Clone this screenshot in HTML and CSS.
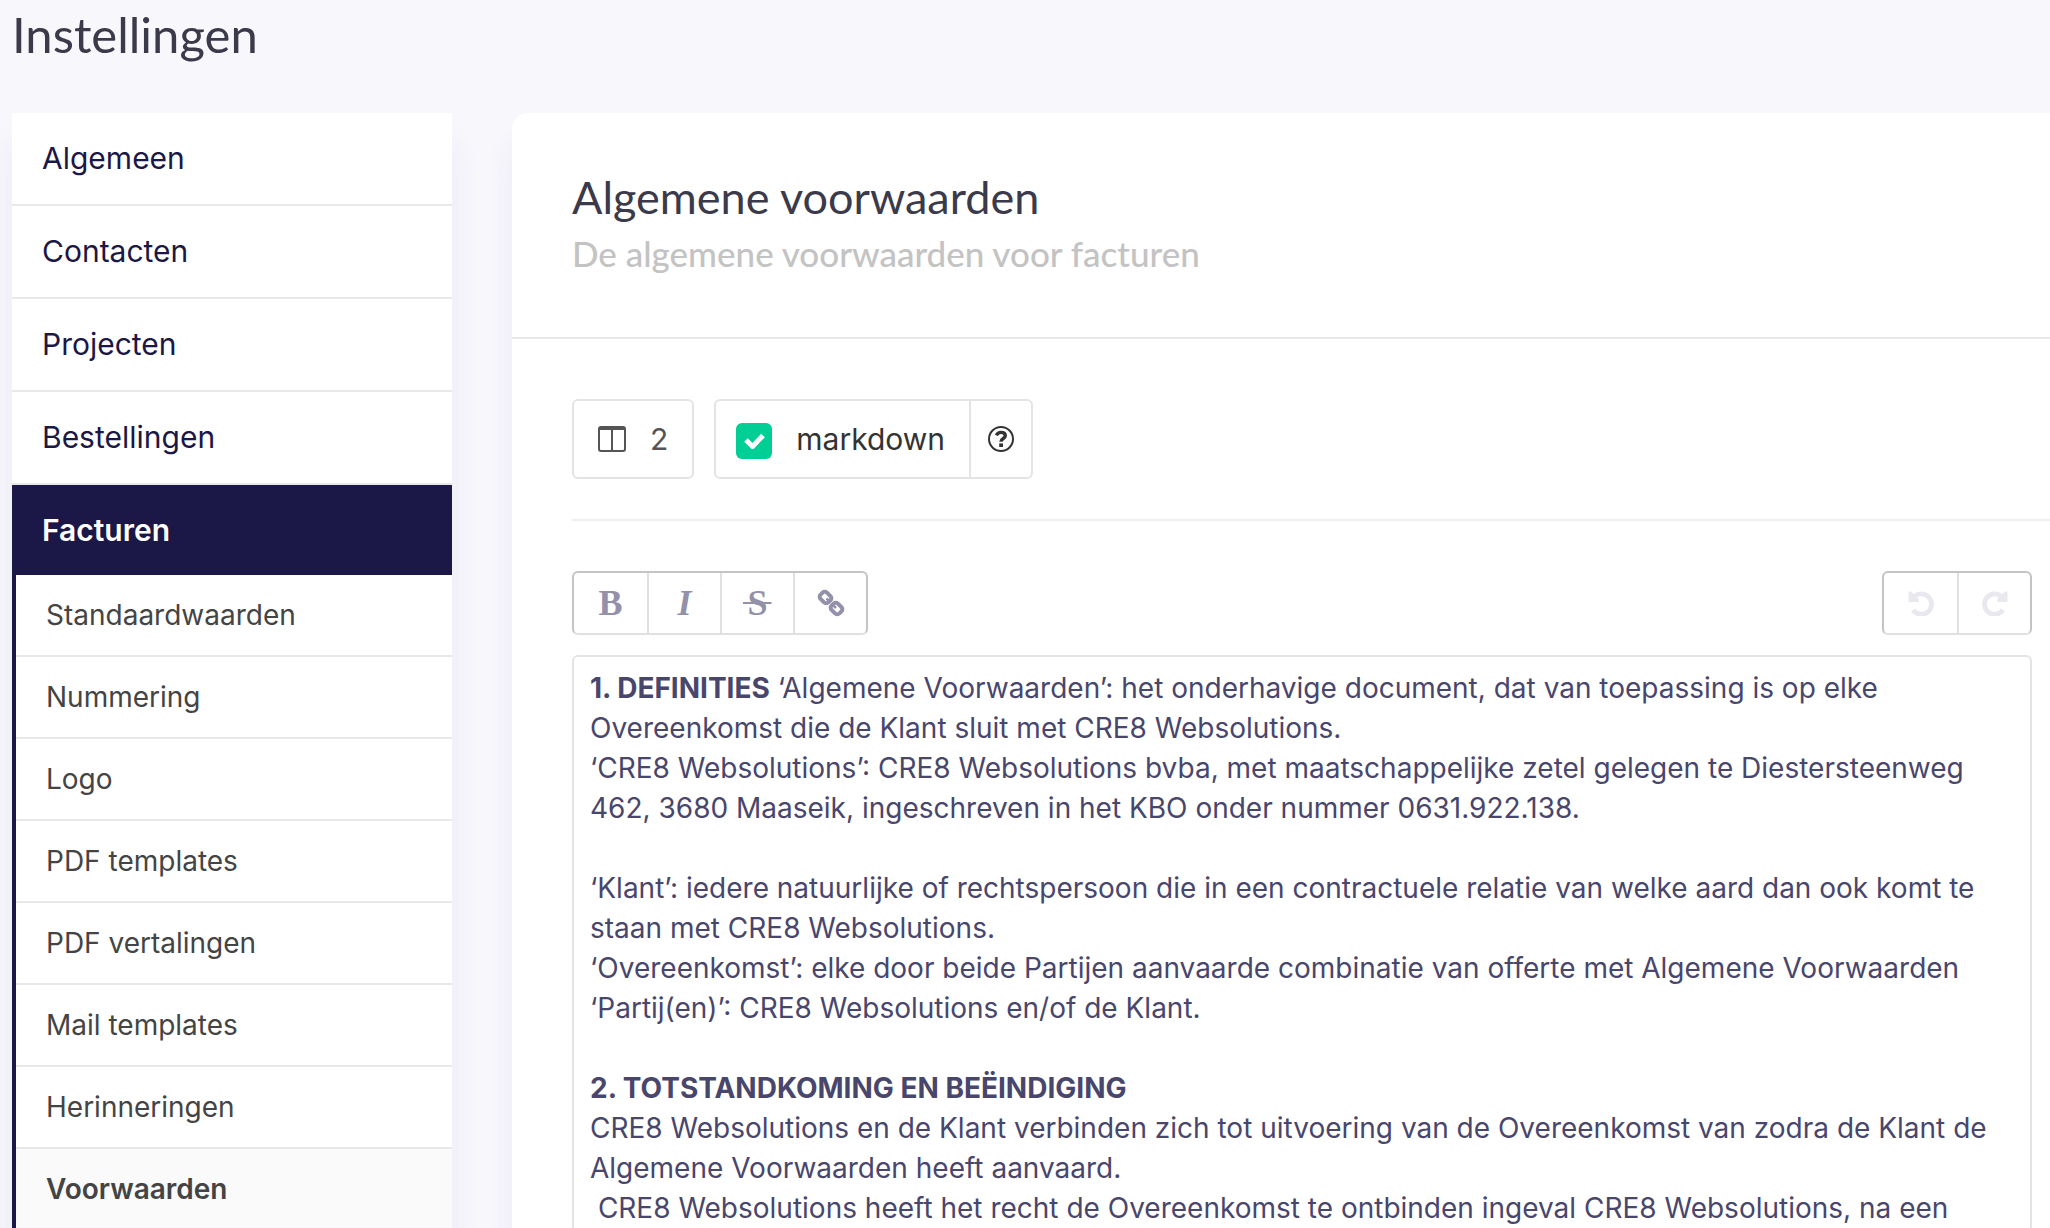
FILE: index.html
```
<!DOCTYPE html>
<html lang="nl">
<head>
<meta charset="utf-8">
<title>Instellingen</title>
<link rel="stylesheet" href="styles.css">
</head>
<body>
<h1 class="page-title">Instellingen</h1>
<div class="layout">
  <nav class="sidebar" aria-label="Instellingen">
    <a class="nav-item" href="#algemeen">Algemeen</a>
    <a class="nav-item" href="#contacten">Contacten</a>
    <a class="nav-item" href="#projecten">Projecten</a>
    <a class="nav-item" href="#bestellingen">Bestellingen</a>
    <a class="nav-item nav-item-active" href="#facturen">Facturen</a>
    <div class="subnav">
      <a class="sub-item" href="#standaardwaarden">Standaardwaarden</a>
      <a class="sub-item" href="#nummering">Nummering</a>
      <a class="sub-item" href="#logo">Logo</a>
      <a class="sub-item" href="#pdf-templates">PDF templates</a>
      <a class="sub-item" href="#pdf-vertalingen">PDF vertalingen</a>
      <a class="sub-item" href="#mail-templates">Mail templates</a>
      <a class="sub-item" href="#herinneringen">Herinneringen</a>
      <a class="sub-item sub-item-active" href="#voorwaarden" aria-current="page">Voorwaarden</a>
    </div>
  </nav>
  <main class="card">
    <header class="card-header">
      <h2 class="card-title">Algemene voorwaarden</h2>
      <p class="card-subtitle">De algemene voorwaarden voor facturen</p>
    </header>
    <div class="card-body">
      <div class="options">
        <button class="box columns-button" type="button">
          <svg width="28" height="26" viewBox="0 0 28 26" aria-hidden="true"><path fill="none" stroke="currentColor" stroke-width="2" d="M3 1h22a2 2 0 0 1 2 2v20a2 2 0 0 1-2 2H3a2 2 0 0 1-2-2V3a2 2 0 0 1 2-2zM14 4v21"/><path fill="currentColor" d="M1 1h26v3H1z"/></svg>
          <span>2</span>
        </button>
        <div class="box option-group">
          <label class="markdown-label" for="markdown"><input class="markdown-check" type="checkbox" id="markdown" checked>markdown</label>
          <button class="help-button" type="button" aria-label="Help">
            <svg width="26" height="26" viewBox="0 0 26 26" aria-hidden="true"><circle cx="13" cy="13" r="12" fill="none" stroke="currentColor" stroke-width="2"/><path fill="none" stroke="currentColor" stroke-width="3.400" d="M8.400 9.400C9.400 7.200 11.200 6.400 13 6.400c2.600 0 4.300 1.300 4.300 3.300 0 2.900-4.300 2.700-4.300 6"/><path fill="currentColor" d="M11.200 17.400h3.800V21h-3.800z"/></svg>
          </button>
        </div>
      </div>
      <div class="toolbar">
        <div class="tools">
          <button class="tool" type="button" aria-label="Vet"><span class="glyph">B</span></button>
          <button class="tool" type="button" aria-label="Cursief"><span class="glyph glyph-italic">I</span></button>
          <button class="tool" type="button" aria-label="Doorhalen"><span class="glyph glyph-strike">S</span></button>
          <button class="tool" type="button" aria-label="Link">
            <svg width="28" height="28" viewBox="0 0 28 28" aria-hidden="true"><g fill="none" stroke="currentColor" stroke-width="4"><rect x="3" y="4" width="11" height="9" rx="3" transform="rotate(45 8.500 8.500)"/><rect x="14" y="15" width="11" height="9" rx="3" transform="rotate(45 19.500 19.500)"/></g><path fill="none" stroke="currentColor" stroke-width="2.500" d="M9.500 9.500l2.500 2.500M16.500 16.500l2.500 2.500"/></svg>
          </button>
        </div>
        <div class="tools">
          <button class="tool" type="button" aria-label="Ongedaan maken" disabled>
            <svg width="26" height="26" viewBox="0 0 26 26" aria-hidden="true"><path fill="none" stroke="currentColor" stroke-width="4.800" d="M6 7A10.200 10.200 0 1 1 5 20"/><path fill="currentColor" d="M.5 1.500h2.300l8 7.500v3H.5z"/></svg>
          </button>
          <button class="tool" type="button" aria-label="Opnieuw" disabled>
            <svg width="26" height="26" viewBox="0 0 26 26" aria-hidden="true"><g transform="matrix(-1 0 0 1 26 0)"><path fill="none" stroke="currentColor" stroke-width="4.800" d="M6 7A10.200 10.200 0 1 1 5 20"/><path fill="currentColor" d="M.5 1.500h2.300l8 7.500v3H.5z"/></g></svg>
          </button>
        </div>
      </div>
      <div class="editor" contenteditable="true" role="textbox" aria-multiline="true" aria-label="Algemene voorwaarden" spellcheck="false"><b>1. DEFINITIES</b> ‘Algemene Voorwaarden’: het onderhavige document, dat van toepassing is op elke Overeenkomst die de Klant sluit met CRE8 Websolutions.<br>‘CRE8 Websolutions’: CRE8 Websolutions bvba, met maatschappelijke zetel gelegen te Diestersteenweg 462, 3680 Maaseik, ingeschreven in het KBO onder nummer 0631.922.138.<br><br>‘Klant’: iedere natuurlijke of rechtspersoon die in een contractuele relatie van welke aard dan ook komt te staan met CRE8 Websolutions.<br>‘Overeenkomst’: elke door beide Partijen aanvaarde combinatie van offerte met Algemene Voorwaarden<br>‘Partij(en)’: CRE8 Websolutions en/of de Klant.<br><br><b>2. TOTSTANDKOMING EN BEËINDIGING</b><br>CRE8 Websolutions en de Klant verbinden zich tot uitvoering van de Overeenkomst van zodra de Klant de Algemene Voorwaarden heeft aanvaard.<br>&nbsp;CRE8 Websolutions heeft het recht de Overeenkomst te ontbinden ingeval CRE8 Websolutions, na een</div>
    </div>
  </main>
</div>
</body>
</html>
```
FILE: styles.css
```
* {
  box-sizing: border-box;
}

body {
  margin: 0;
  height: 100vh;
  overflow: hidden;
  background: #f8f7fc;
  font-family: Inter, "Liberation Sans", sans-serif;
}

button {
  margin: 0;
  padding: 0;
  border: 0;
  background: none;
  font: inherit;
}

a {
  text-decoration: none;
}

svg {
  display: block;
}

.page-title {
  margin: 0;
  padding: 2px 12px 0;
  height: 113px;
  font: 400 49px/64px Lato, sans-serif;
  color: #3b3a4a;
}

.layout {
  display: flex;
  align-items: flex-start;
  gap: 60px;
  padding-left: 12px;
}

.sidebar {
  flex: 0 0 440px;
  background: #fff;
  box-shadow: 0 30px 30px rgba(70, 60, 130, 0.07);
}

.nav-item,
.sub-item {
  display: block;
  border-bottom: 2px solid #e8e8e8;
}

.nav-item {
  padding: 0 30px;
  font-size: 30px;
  line-height: 91px;
  color: #1b1746;
}

.nav-item-active {
  border-bottom: 0;
  background: #1b1746;
  font-weight: 600;
  line-height: 90px;
  color: #fff;
}

.subnav {
  border-left: 4px solid #1b1746;
}

.sub-item {
  padding: 0 30px;
  font-size: 28px;
  line-height: 80px;
  color: #444;
}

.sub-item-active {
  background: #fafafa;
  font-weight: 600;
}

.card {
  flex: 1;
  min-width: 0;
  border-radius: 16px 0 0 0;
  background: #fff;
  box-shadow: 0 30px 30px rgba(70, 60, 130, 0.07);
}

.card-header {
  padding: 58px 60px 62px;
  border-bottom: 2px solid #e8e8e8;
}

.card-title {
  margin: 0;
  font: 400 45px/52px Lato, sans-serif;
  color: #3b3a4a;
}

.card-subtitle {
  margin: 8px 0 0;
  font: 500 35px/44px Lato, sans-serif;
  color: #c3c3c3;
}

.card-body {
  padding: 60px 0 60px 60px;
}

.options {
  display: flex;
  gap: 20px;
  padding-bottom: 40px;
  border-bottom: 2px solid #eee;
}

.box {
  display: flex;
  align-items: center;
  height: 80px;
  border: 2px solid #e4e4e4;
  border-radius: 6px;
  font-size: 30px;
}

.columns-button {
  gap: 24px;
  padding: 0 24px;
  color: #555;
}

.option-group {
  align-items: stretch;
  color: #333;
}

.markdown-label {
  display: flex;
  align-items: center;
  gap: 24px;
  padding: 0 24px 0 20px;
}

.markdown-check {
  appearance: none;
  width: 36px;
  height: 36px;
  margin: 4px 0 0;
  border-radius: 6px;
  background: #00cf95 url("data:image/svg+xml,%3Csvg xmlns='http://www.w3.org/2000/svg' viewBox='0 0 36 36'%3E%3Cpath fill='none' stroke='white' stroke-width='5' stroke-linejoin='round' d='M10 17l6.500 6.500L27 12.500'/%3E%3C/svg%3E");
}

.help-button {
  padding: 0 17px;
  border-left: 2px solid #e4e4e4;
  color: #333;
}

.toolbar {
  display: flex;
  justify-content: space-between;
  margin: 50px 18px 20px 0;
}

.tools {
  display: flex;
  height: 64px;
  border: 2px solid #c4c4c4;
  border-bottom-color: #e0e0e0;
  border-radius: 6px;
}

.tool {
  display: flex;
  align-items: center;
  justify-content: center;
  width: 73px;
  color: #9390aa;
}

.tool + .tool {
  border-left: 2px solid #e0e0e0;
}

.tool:disabled {
  color: #e9e8ee;
}

.glyph {
  font: 700 36px/60px "Liberation Serif", serif;
}

.glyph-italic {
  font-style: italic;
}

.glyph-strike {
  padding: 0 4px;
  background: linear-gradient(#9390aa, #9390aa) center / 100% 2px no-repeat;
}

.editor {
  margin-right: 18px;
  padding: 11px 16px;
  border: 2px solid #e4e4e4;
  border-radius: 6px;
  font-size: 28px;
  line-height: 40px;
  color: #48466d;
}
```
